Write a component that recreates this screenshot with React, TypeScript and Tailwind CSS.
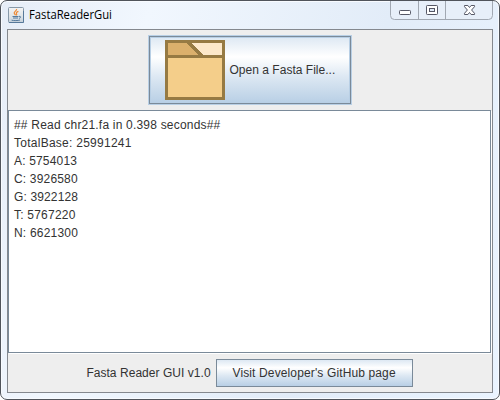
const results = [
  { text: '## Read chr21.fa in 0.398 seconds##', spacing: 'tracking-[0.2px]' },
  { text: 'TotalBase: 25991241', spacing: 'tracking-[0.26px]' },
  { text: 'A: 5754013', spacing: 'tracking-[0.17px]' },
  { text: 'C: 3926580', spacing: 'tracking-[0.17px]' },
  { text: 'G: 3922128', spacing: 'tracking-[0.14px]' },
  { text: 'T: 5767220', spacing: 'tracking-[0.22px]' },
  { text: 'N: 6621300', spacing: 'tracking-[0.2px]' },
];

function JavaIcon() {
  return (
    <svg width="16" height="16" viewBox="0 0 16 16" className="block">
      <defs>
        <linearGradient id="tile" x1="0" y1="0" x2="0" y2="1">
          <stop offset="0" stopColor="#f4f4f4" />
          <stop offset="0.6" stopColor="#dfe4e8" />
          <stop offset="1" stopColor="#c3cfda" />
        </linearGradient>
      </defs>
      <rect x="0.5" y="0.5" width="15" height="15" rx="1" fill="url(#tile)" stroke="#8799a9" />
      <path d="M1 15.5h14.5V4" fill="none" stroke="#57799a" />
      <path d="M8.6 2c.6 1.8-3.2 2.6-2.3 4.4.3.7 1.1 1.1 1.3 1.8M10.4 4.4C8.8 5 7.8 5.8 8.6 7c.3.5.2.9-.3 1.3" fill="none" stroke="#ee8a35" strokeWidth="1.2" />
      <path d="M4.5 9.5h6M5 11h5M11 9.4c2.2-.5 2.2 1.4 0 2M3.6 13.2c2 .6 6.5.5 8.4-.2" fill="none" stroke="#557a9d" />
    </svg>
  );
}

function WindowControls() {
  return (
    <svg width="104" height="20" viewBox="0 0 104 20" className="block">
      <path d="M.5 0v14.5q0 4 4 4h94q4 0 4-4V0" fill="#e7eff9" />
      <path d="M.5 0v14.5q0 4 4 4h94q4 0 4-4V0M28.5 0v18M55.5 0v18" fill="none" stroke="#a1a8b2" />
      <rect x="9.5" y="9.5" width="11" height="4" rx="0.8" fill="#fff" stroke="#555765" />
      <rect x="36.5" y="4.5" width="11" height="9" rx="0.8" fill="#fff" stroke="#555765" />
      <rect x="39.5" y="7.5" width="5" height="3" fill="#dfe9f6" stroke="#555765" />
      <path d="M74.5 4.5h3.4l1.6 2 1.6-2h3.4v1.2L81.6 9l2.9 3.3v1.2h-3.4l-1.6-2-1.6 2h-3.4v-1.2L77.4 9l-2.9-3.3z" fill="#fff" stroke="#555765" />
    </svg>
  );
}

function FolderIcon() {
  return (
    <svg width="60" height="60" viewBox="0 0 60 60" className="block shrink-0" shapeRendering="crispEdges">
      <rect width="60" height="60" fill="#967a43" />
      <path d="M3 3h19l11 12H3z" fill="#dbb06c" />
      <path d="M27 3h30v12H38z" fill="#fce8ca" />
      <rect x="3" y="18" width="54" height="39" fill="#f4ce8a" />
    </svg>
  );
}

export default function App() {
  return (
    <div className="h-[400px] w-[500px] overflow-hidden bg-white font-['Liberation_Sans',Arial,sans-serif] text-[12px] text-[#333333]">
      <div className="flex h-full w-full flex-col rounded-[7px] border border-[#50545b] bg-[linear-gradient(105deg,#e6edf7_0%,#f1f7fe_25%,#e2ecf8_65%,#eaf4ff_100%)] px-[6px] pb-[6px] shadow-[inset_0_0_0_1px_#f8fbff]">
        <header className="flex h-7 shrink-0 items-start justify-between">
          <div className="flex items-center gap-[5px] pt-[6px] pl-px">
            <JavaIcon />
            <h1 className="h-4 origin-left scale-x-[0.9] font-['Open_Sans','Noto_Sans',sans-serif] text-[12.5px] leading-[15px] whitespace-nowrap text-black">FastaReaderGui</h1>
          </div>
          <div className="-mr-[1px]"><WindowControls /></div>
        </header>
        <main className="flex min-h-0 flex-1 flex-col border border-[#84888e] bg-[#eeeeee]">
          <div className="flex h-[80px] shrink-0 justify-center pt-[5px] pr-px">
            <button className="flex h-[70px] w-[204px] items-center border border-[#b8cfe5]">
              <span className="flex h-full w-full items-center gap-[5px] border border-[#7a8a99] bg-[linear-gradient(180deg,#dde8f3_0%,#ffffff_30%,#dde8f3_60%,#b8cfe5_100%)] pl-[15px] shadow-[inset_0_0_0_1px_#b8cfe5]">
                <FolderIcon />
                <span className="tracking-[0.02px] whitespace-nowrap">Open a Fasta File...</span>
              </span>
            </button>
          </div>
          <section className="mr-px min-h-0 flex-1 border border-[#7a8a99] bg-white pt-[5px] pl-[5px] shadow-[1px_1px_0_#ffffff]">
            {results.map((line) => (
              <p key={line.text} className={`h-[18px] leading-[18px] whitespace-nowrap ${line.spacing}`}>{line.text}</p>
            ))}
          </section>
          <footer className="flex h-[39px] shrink-0 items-center justify-center gap-[5px] pr-px">
            <span className="tracking-[0.04px] whitespace-nowrap">Fasta Reader GUI v1.0</span>
            <button className="h-7 w-[197px] border border-[#7a8a99] bg-[linear-gradient(180deg,#dde8f3_0%,#ffffff_30%,#dde8f3_60%,#b8cfe5_100%)] tracking-[0.13px] whitespace-nowrap">Visit Developer's GitHub page</button>
          </footer>
        </main>
      </div>
    </div>
  );
}
